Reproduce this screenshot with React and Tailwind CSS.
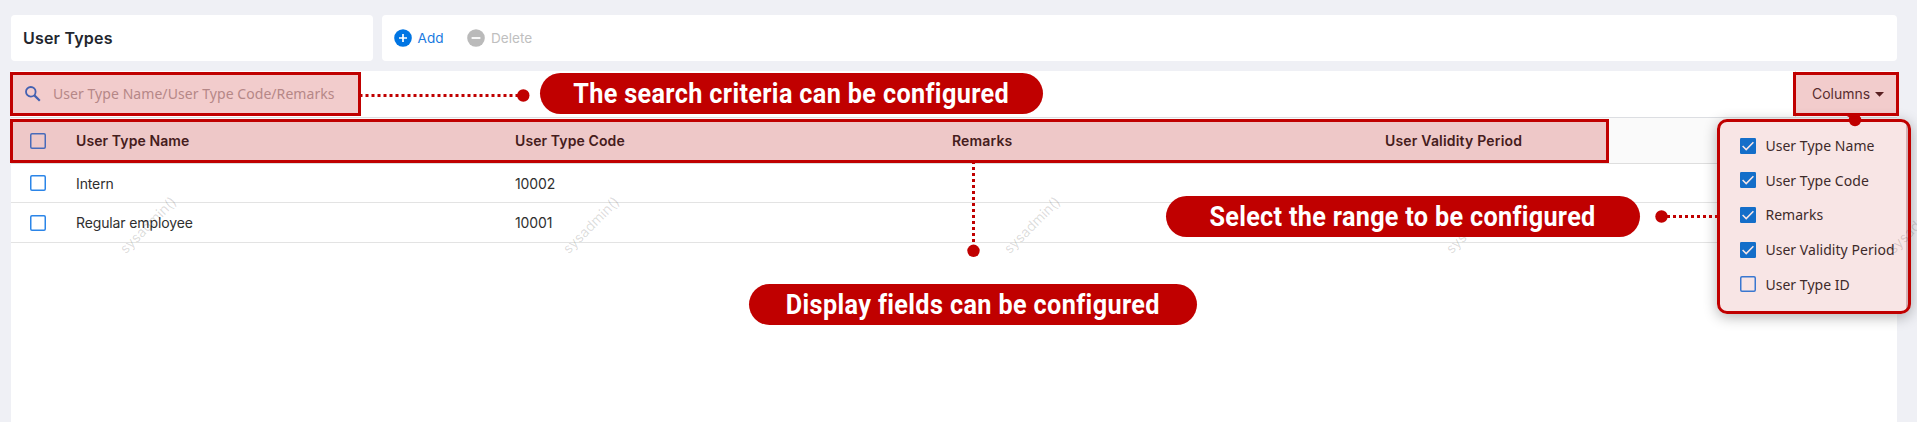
import React from "react";

const columns = [
  { label: "User Type Name", style: "tracking-[0.1px]" },
  { label: "User Type Code", style: "tracking-[0.1px]" },
  { label: "Remarks", style: "tracking-[0.15px]" },
  { label: "User Validity Period", style: "tracking-[0.19px]" },
];

const options = [
  { label: "User Type Name", checked: true },
  { label: "User Type Code", checked: true },
  { label: "Remarks", checked: true },
  { label: "User Validity Period", checked: true },
  { label: "User Type ID", checked: false },
];

const rows = [
  { name: "Intern", code: "10002" },
  { name: "Regular employee", code: "10001" },
];

const watermarks = [
  "left-[108px]",
  "left-[551px]",
  "left-[992px]",
  "left-[1434px]",
  "left-[1876px]",
];

const GRID = "grid grid-cols-[65px_439px_437px_433px_1fr] items-center";

function Checkbox({ checked = false }) {
  return (
    <svg width="16" height="16" viewBox="0 0 16 16" className="block shrink-0">
      {checked ? (
        <>
          <rect width="16" height="16" rx="1.2" fill="#017be0" />
          <path d="M2.6 8 L6.2 11.6 L13.4 4.2" fill="none" stroke="#fff" strokeWidth="1.5" />
        </>
      ) : (
        <rect x="0.75" y="0.75" width="14.5" height="14.5" rx="1.2" fill="none" stroke="#2b85e8" strokeWidth="1.5" />
      )}
    </svg>
  );
}

function Title() {
  return (
    <header className="flex h-[46px] w-[362px] items-center rounded bg-white pl-3">
      <h1 className="text-[16px] font-semibold tracking-[0.2px] text-[#23262e]">User Types</h1>
    </header>
  );
}

function Toolbar() {
  return (
    <div className="flex h-[46px] flex-1 items-center rounded bg-white pl-3 text-[13.6px]">
      <button className="flex items-center gap-[5.5px] text-[#1a7ae0]">
        <svg width="18" height="18" viewBox="0 0 18 18">
          <circle cx="9" cy="9" r="8.8" fill="#0075e3" />
          <path d="M9 5v8M5 9h8" stroke="#fff" strokeWidth="1.7" />
        </svg>
        Add
      </button>
      <button className="ml-[23.5px] flex items-center gap-[6px] text-[#bfbfbf]">
        <svg width="18" height="18" viewBox="0 0 18 18">
          <circle cx="9" cy="9" r="8.8" fill="#bababa" />
          <path d="M4.6 9h8.8" stroke="#fff" strokeWidth="1.8" />
        </svg>
        Delete
      </button>
    </div>
  );
}

function SearchBar() {
  return (
    <div className="flex h-[47px] items-center border-b border-[#dcdee2]">
      <svg width="16" height="16" viewBox="0 0 16 16" className="ml-[14px]">
        <circle cx="5.8" cy="5.8" r="4.8" fill="none" stroke="#2478dd" strokeWidth="1.8" />
        <path d="M9.4 9.4 L14.8 14.8" stroke="#2478dd" strokeWidth="2.2" />
      </svg>
      <span className="ml-[12px] flex-1 pb-[1px] font-['Noto_Sans'] text-[14px] tracking-[0.06px] text-[#b3a9a9]">
        User Type Name/User Type Code/Remarks
      </span>
      <button className="flex h-full w-[102px] items-center gap-[5px] border-l border-[#e4e4e4] pb-[2px] pl-4 text-[14px] text-[#40373a]">
        Columns
        <svg width="9" height="5" viewBox="0 0 9 5" className="mt-[2px]">
          <path d="M0 0h9L4.5 4.8z" fill="#40282a" />
        </svg>
      </button>
    </div>
  );
}

function Table() {
  return (
    <div className="text-[14px] text-[#2f2f2f]">
      <div className={GRID + " h-[46px] border-b border-[#dedede] bg-[#fafafa] font-semibold text-[#262626]"}>
        <span className="pl-[19px]">
          <Checkbox />
        </span>
        {columns.map((c) => (
          <span key={c.label} className={c.style}>
            {c.label}
          </span>
        ))}
      </div>
      {rows.map((r) => (
        <div key={r.code} className={GRID + " h-[39px] border-b border-[#e3e3e3] odd:h-[40px]"}>
          <span className="pl-[19px]">
            <Checkbox />
          </span>
          <span className="tracking-[-0.12px]">{r.name}</span>
          <span className="tracking-[-0.1px]">{r.code}</span>
        </div>
      ))}
    </div>
  );
}

function ColumnMenu() {
  return (
    <div className="absolute left-[1717px] top-[119px] h-[195px] w-[194px] overflow-hidden rounded-[10px] bg-white shadow-[0_3px_14px_rgba(0,0,0,0.3)]">
      <ul className="flex flex-col gap-[18.7px] pl-[23px] pt-[18.6px] font-['Noto_Sans'] text-[14px] tracking-[0.04px] text-[#2f2f2f]">
        {options.map((o) => (
          <li key={o.label} className="flex h-4 items-center gap-[9.4px] whitespace-nowrap">
            <Checkbox checked={o.checked} />
            {o.label}
          </li>
        ))}
      </ul>
      <div className="absolute right-0 top-0 h-full w-[5px] bg-[#d6c5ca]" />
    </div>
  );
}

function Callout({ place, text, textStyle }) {
  return (
    <div className={"absolute flex h-[41px] items-center justify-center rounded-full bg-[#c00000] text-white " + place}>
      <span className={"whitespace-nowrap pt-[1px] font-['Roboto'] text-[28px] font-bold leading-none scale-x-90 " + textStyle}>
        {text}
      </span>
    </div>
  );
}

export default function App() {
  return (
    <div className="relative flex h-[422px] w-[1917px] flex-col overflow-hidden bg-[#eff0f5] pl-[11px] pr-5 pt-[15px] font-['Inter',sans-serif]">
      <div className="flex gap-[9px]">
        <Title />
        <Toolbar />
      </div>
      <main className="mt-[10px] flex-1 bg-white">
        <SearchBar />
        <Table />
      </main>

      <ColumnMenu />

      {watermarks.map((w) => (
        <span
          key={w}
          className={"absolute top-[215px] w-[80px] -rotate-45 text-center text-[14px] leading-5 text-black/15 " + w}
        >
          sysadmin()
        </span>
      ))}

      <div className="absolute left-[10px] top-[72px] h-[44px] w-[351px] border-[3px] border-[#c00000] bg-[#c00000]/20" />
      <div className="absolute left-[10px] top-[119px] h-[44px] w-[1599px] border-[3px] border-[#c00000] bg-[#c00000]/20" />
      <div className="absolute left-[1793px] top-[72px] h-[44px] w-[106px] border-[3px] border-[#c00000] bg-[#c00000]/20" />
      <div className="absolute left-[1717px] top-[119px] h-[195px] w-[194px] rounded-[10px] border-[3px] border-[#c00000] bg-[#c00000]/10" />

      <svg width="1917" height="422" className="absolute left-0 top-0">
        <g stroke="#c00000" strokeWidth="3" strokeDasharray="3 3">
          <path d="M359.5 95.5H520" />
          <path d="M973.5 161V246" />
          <path d="M1718 216.5H1665" />
        </g>
        <g fill="#c00000">
          <circle cx="523.3" cy="95.5" r="6.2" />
          <circle cx="973.5" cy="250.8" r="6.2" />
          <circle cx="1661.5" cy="216.5" r="6.2" />
          <circle cx="1855" cy="120" r="6.2" />
          <path d="M1845 115H1856V121z" />
        </g>
      </svg>

      <Callout place="left-[540px] top-[73px] w-[503px]" text="The search criteria can be configured" textStyle="tracking-[0.4px]" />
      <Callout place="left-[1166px] top-[196px] w-[474px]" text="Select the range to be configured" textStyle="tracking-[0.35px]" />
      <Callout place="left-[749px] top-[284px] w-[448px]" text="Display fields can be configured" textStyle="tracking-[0.42px]" />
    </div>
  );
}
